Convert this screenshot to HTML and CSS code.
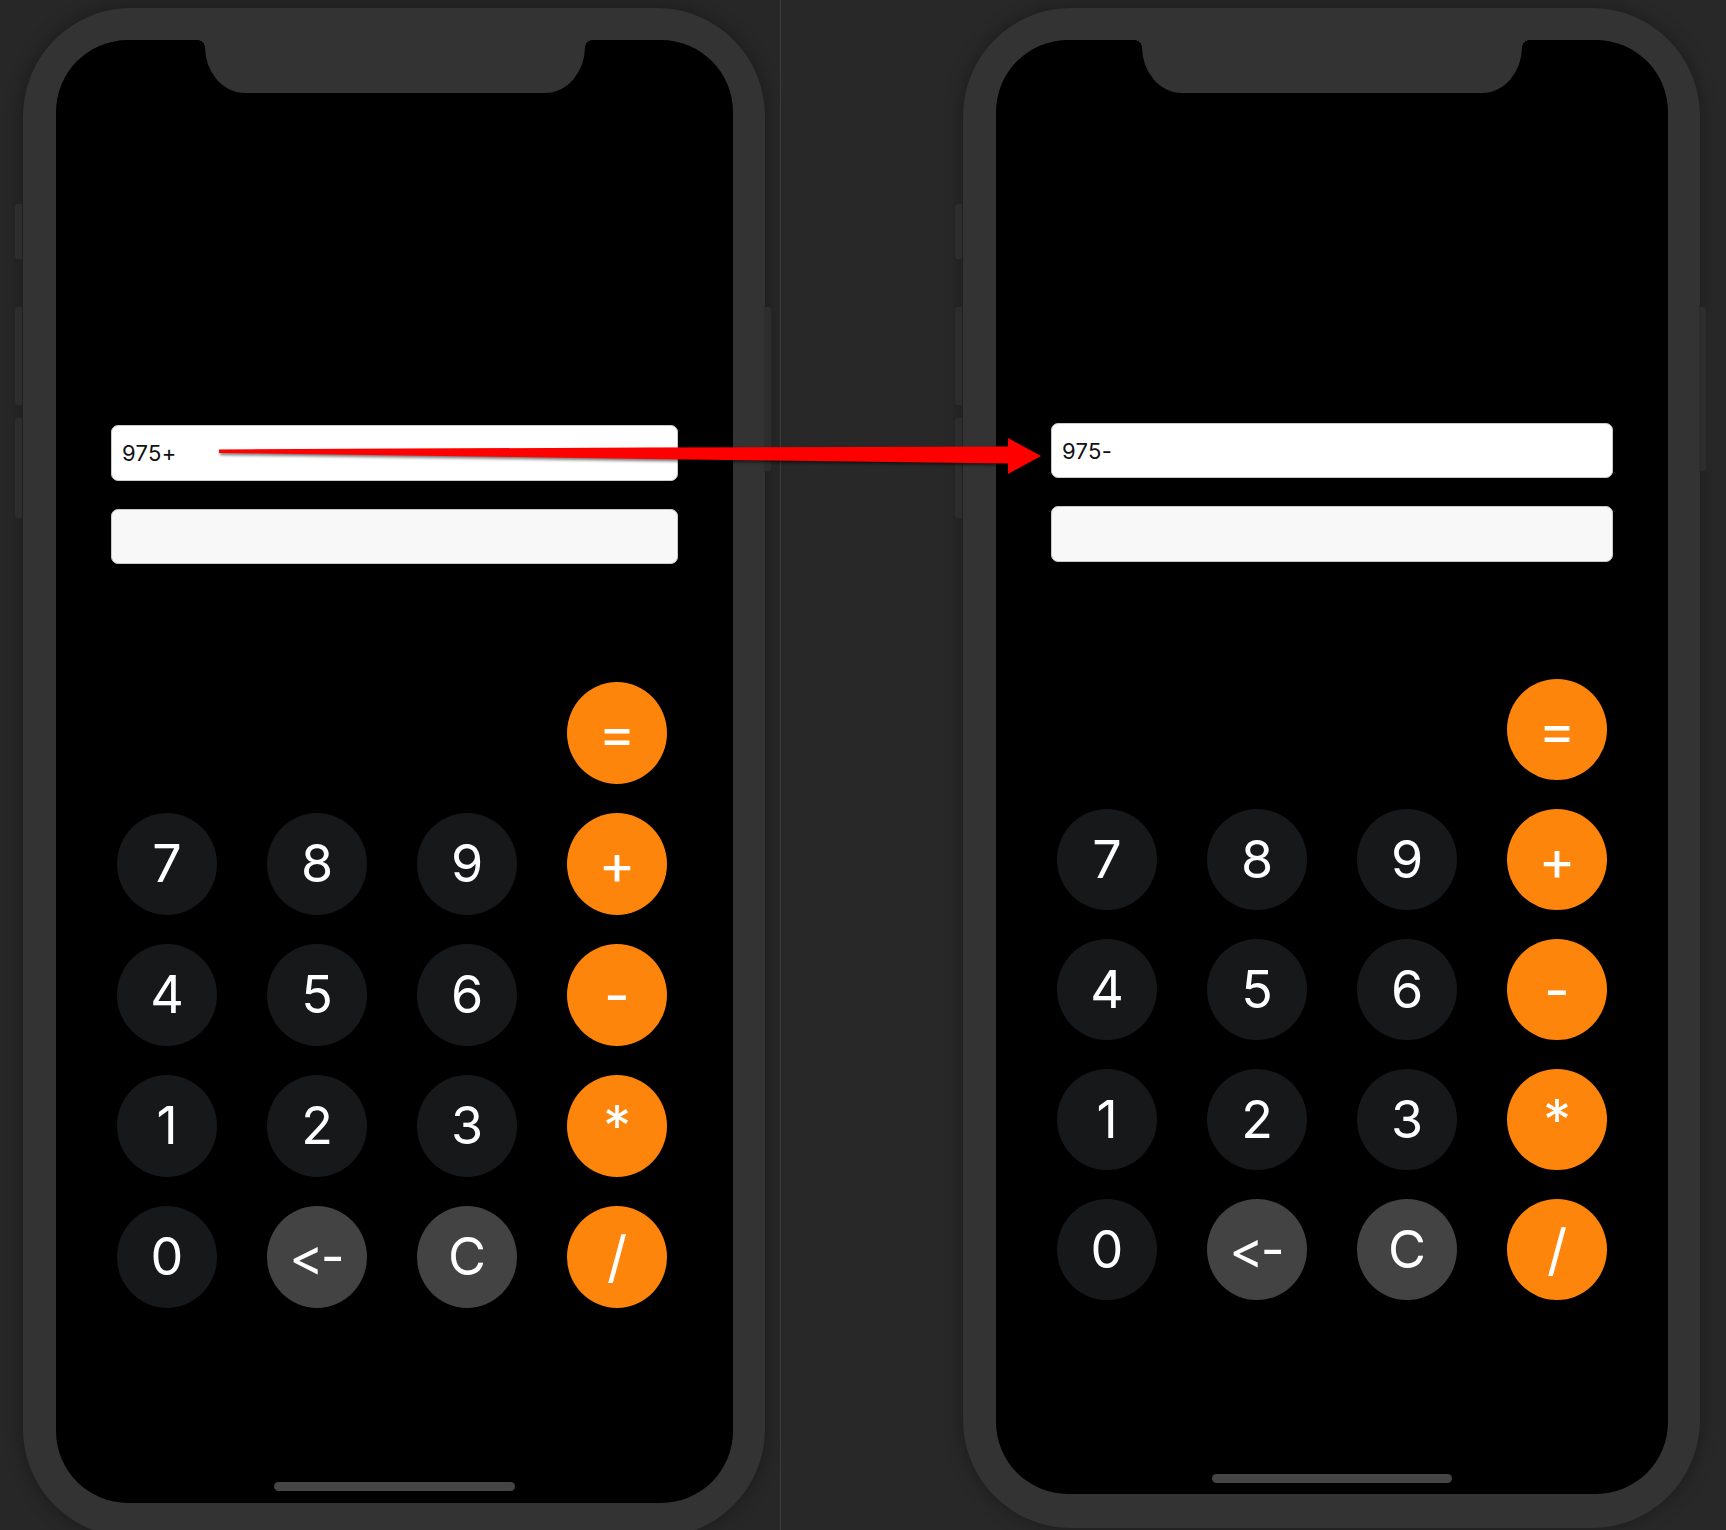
FILE: index.html
```html
<!DOCTYPE html>
<html lang="en">
<head>
<meta charset="utf-8">
<title>Calculator comparison</title>
<link rel="stylesheet" href="styles.css">
</head>
<body>
  <section class="panel panel-left">
    <div class="phone phone-a">
      <span class="side-btn side-l1"></span>
      <span class="side-btn side-l2"></span>
      <span class="side-btn side-l3"></span>
      <span class="side-btn side-r1"></span>
      <div class="screen screen-a">
        <div class="notch"></div>
        <div class="field">975+</div>
        <div class="field field-result"></div>
        <div class="keypad keypad-a">
          <div class="key key-orange key-eq">=</div>
          <div class="key">7</div>
          <div class="key">8</div>
          <div class="key">9</div>
          <div class="key key-orange">+</div>
          <div class="key">4</div>
          <div class="key">5</div>
          <div class="key">6</div>
          <div class="key key-orange">-</div>
          <div class="key">1</div>
          <div class="key">2</div>
          <div class="key">3</div>
          <div class="key key-orange">*</div>
          <div class="key">0</div>
          <div class="key key-gray key-back">&lt;-</div>
          <div class="key key-gray">C</div>
          <div class="key key-orange">/</div>
        </div>
        <div class="home-bar"></div>
      </div>
    </div>
  </section>
  <div class="divider"></div>
  <section class="panel panel-right">
    <div class="phone phone-b">
      <span class="side-btn side-l1"></span>
      <span class="side-btn side-l2"></span>
      <span class="side-btn side-l3"></span>
      <span class="side-btn side-r1"></span>
      <div class="screen screen-b">
        <div class="notch"></div>
        <div class="field field-b">975-</div>
        <div class="field field-result field-b"></div>
        <div class="keypad keypad-b">
          <div class="key key-orange key-eq">=</div>
          <div class="key">7</div>
          <div class="key">8</div>
          <div class="key">9</div>
          <div class="key key-orange">+</div>
          <div class="key">4</div>
          <div class="key">5</div>
          <div class="key">6</div>
          <div class="key key-orange">-</div>
          <div class="key">1</div>
          <div class="key">2</div>
          <div class="key">3</div>
          <div class="key key-orange">*</div>
          <div class="key">0</div>
          <div class="key key-gray key-back">&lt;-</div>
          <div class="key key-gray">C</div>
          <div class="key key-orange">/</div>
        </div>
        <div class="home-bar home-bar-b"></div>
      </div>
    </div>
  </section>
  <svg class="arrow" width="1726" height="1530" viewBox="0 0 1726 1530" aria-hidden="true">
    <polygon points="219,449.5 300,449 650,447.5 1008,446.5 1008,438 1041,456 1008,474 1008,463.5 650,459 300,454 219,453"/>
  </svg>
</body>
</html>
```
FILE: styles.css
```css
html, body {
  margin: 0;
  padding: 0;
}
body {
  width: 1726px;
  height: 1530px;
  overflow: hidden;
  display: flex;
  position: relative;
  background: #282828;
  font-family: Inter, "Liberation Sans", sans-serif;
  font-variant-ligatures: none;
  font-feature-settings: "calt" 0, "liga" 0;
}
.panel {
  box-sizing: border-box;
  padding-top: 8px;
}
.panel-left {
  width: 780px;
  padding-left: 23px;
  background: #272727;
}
.divider {
  width: 1px;
  background: #3c3c3c;
}
.panel-right {
  flex: 1;
  padding-left: 182px;
  background: #282828;
}
.phone {
  position: relative;
  box-sizing: border-box;
  background: #333333;
  border-radius: 108px;
  padding: 32px 32px 34px 33px;
  box-shadow: 0 0 18px rgba(0, 0, 0, 0.35);
}
.phone-a { width: 742px; }
.phone-b { width: 737px; }
.side-btn {
  position: absolute;
  width: 8px;
  background: #2d2d2d;
  border: 1px solid #242424;
  border-radius: 3px;
  box-sizing: border-box;
}
.side-l1, .side-l2, .side-l3 { left: -9px; border-right: none; border-radius: 3px 0 0 3px; }
.side-l1 { top: 195px; height: 57px; }
.side-l2 { top: 298px; height: 100px; }
.side-l3 { top: 409px; height: 102px; }
.side-r1 { right: -7px; top: 298px; height: 166px; border-left: none; border-radius: 0 3px 3px 0; }

.screen {
  position: relative;
  background: #000;
  border-radius: 72px;
  display: flex;
  flex-direction: column;
  box-sizing: border-box;
  padding: 0 55px;
}
.screen-a { height: 1463px; padding-top: 385px; }
.screen-b { height: 1454px; padding-top: 383px; }

.notch {
  position: absolute;
  top: 0;
  left: 50%;
  width: 380px;
  height: 53px;
  margin-left: -190px;
  background: #333333;
  border-radius: 0 0 40px 40px / 0 0 46px 46px;
}
.notch::before,
.notch::after {
  content: "";
  position: absolute;
  top: 0;
  width: 7px;
  height: 7px;
}
.notch::before {
  left: -7px;
  background: radial-gradient(circle at 0 100%, transparent 6.5px, #333333 7px);
}
.notch::after {
  right: -7px;
  background: radial-gradient(circle at 100% 100%, transparent 6.5px, #333333 7px);
}

.field {
  height: 56px;
  box-sizing: border-box;
  background: #ffffff;
  border: 1px solid #c9c9c9;
  border-radius: 7px;
  display: flex;
  align-items: center;
  padding-left: 10px;
  font-family: Inter, "Liberation Sans", sans-serif;
  font-size: 22px;
  color: #111;
  letter-spacing: 0.3px;
}
.field-b { height: 55px; }
.field-result {
  margin-top: 28px;
  height: 55px;
  background: #f8f8f8;
}
.field-result.field-b { height: 56px; }

.keypad {
  display: grid;
  grid-template-columns: repeat(4, 100px);
  column-gap: 50px;
  margin-left: 6px;
}
.keypad-a { margin-top: 118px; grid-auto-rows: 102px; row-gap: 29px; }
.keypad-b { margin-top: 117px; grid-auto-rows: 101px; row-gap: 29px; }
.key {
  border-radius: 50%;
  background: #17181a;
  color: #fff;
  display: flex;
  align-items: center;
  justify-content: center;
  font-family: Inter, "Liberation Sans", sans-serif;
  font-size: 52px;
  font-weight: 400;
  line-height: 1;
  font-variant-ligatures: none;
  font-feature-settings: "calt" 0, "liga" 0;
}
.key-gray { background: #434343; }
.key-back { letter-spacing: -3px; padding-right: 3px; }
.key-orange { background: #fd850b; font-size: 56px; }
.key-eq { grid-column: 4; }

.home-bar {
  margin-top: auto;
  margin-bottom: 12px;
  align-self: center;
  width: 241px;
  height: 9px;
  border-radius: 5px;
  background: #454545;
}
.home-bar-b { margin-bottom: 11px; width: 240px; }

.arrow {
  position: absolute;
  left: 0;
  top: 0;
  pointer-events: none;
}
.arrow polygon {
  fill: #ff0000;
  filter: drop-shadow(1px 2px 1.5px rgba(0, 0, 0, 0.55));
}
```
